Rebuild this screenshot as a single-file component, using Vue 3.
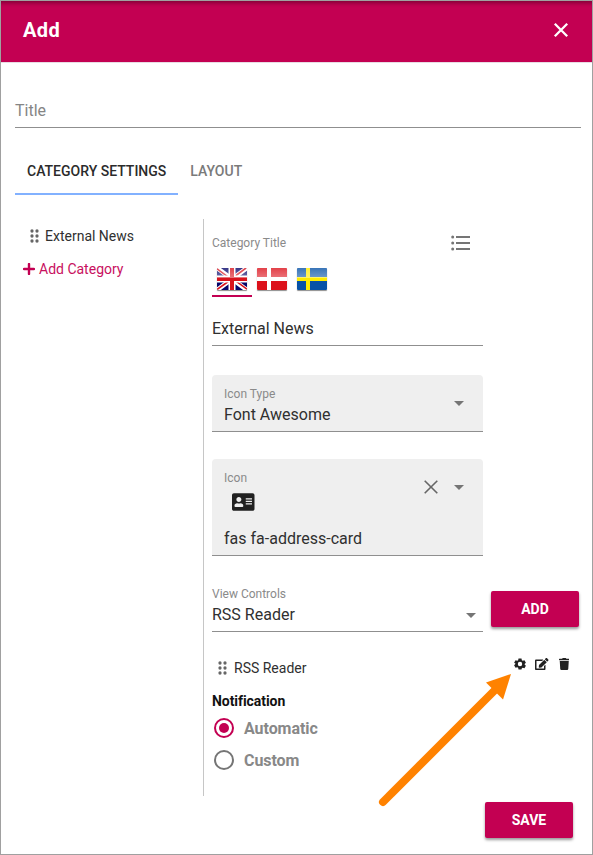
<script setup>
import { ref } from 'vue'

const tabs = ['Category Settings', 'Layout']
const activeTab = ref(0)
const notification = ref('Automatic')
const options = ['Automatic', 'Custom']
const dots = [[2, 2], [7, 2], [2, 7], [7, 7], [2, 12], [7, 12]]
</script>

<template>
  <div class="dialog">
    <header class="header">
      <h1>Add</h1>
      <svg class="close" viewBox="0 0 16 16"><path d="M1.8 1.8L14.2 14.2M14.2 1.8L1.8 14.2" /></svg>
    </header>

    <div class="title-field">Title</div>

    <nav class="tabs">
      <button
        v-for="(tab, i) in tabs"
        :key="tab"
        :class="['tab', { active: activeTab === i }]"
        @click="activeTab = i"
      >{{ tab }}</button>
    </nav>

    <main class="content">
      <aside class="sidebar">
        <div class="category">
          <svg class="grip" viewBox="0 0 9 14"><circle v-for="(d, i) in dots" :key="i" :cx="d[0]" :cy="d[1]" r="1.65" /></svg>
          <span>External News</span>
        </div>
        <div class="add-category">
          <svg class="plus" viewBox="0 0 12 12"><path d="M6 1V11M1 6H11" /></svg>
          <span>Add Category</span>
        </div>
      </aside>

      <section class="panel">
        <div class="column">
          <div class="label-row">
            <span class="label">Category Title</span>
            <svg class="list" viewBox="0 0 19 16">
              <circle cx="1.7" cy="2" r="1.5" /><circle cx="1.7" cy="8" r="1.5" /><circle cx="1.7" cy="14" r="1.5" />
              <path d="M5 1H19V3H5zM5 7H19V9H5zM5 13H19V15H5z" />
            </svg>
          </div>

          <div class="flags">
            <span class="flag active">
              <svg viewBox="0 0 30 22">
                <defs>
                  <linearGradient id="gloss" x1="0" y1="0" x2="0" y2="1">
                    <stop offset="0" stop-color="#fff" stop-opacity=".2" />
                    <stop offset="1" stop-color="#fff" stop-opacity=".42" />
                  </linearGradient>
                </defs>
                <path fill="#06066b" d="M0 0H30V22H0z" />
                <path stroke="#fff" stroke-width="4.6" d="M0 0L30 22M30 0L0 22" />
                <path stroke="#d8131d" stroke-width="1.6" d="M0 .8L12 9.6M18 12.4L30 21.2M29 0L17 9M12 13L0 21.5" />
                <path stroke="#fff" stroke-width="7" d="M15 0V22M0 11H30" />
                <path stroke="#d8131d" stroke-width="4" d="M15 0V22M0 11H30" />
                <path fill="url(#gloss)" d="M0 0H30V10H0z" />
              </svg>
            </span>
            <span class="flag">
              <svg viewBox="0 0 30 22">
                <path fill="#dc111b" d="M0 0H30V22H0z" />
                <path stroke="#fff" stroke-width="4" d="M12 0V22M0 11H30" />
                <path fill="url(#gloss)" d="M0 0H30V10H0z" />
              </svg>
            </span>
            <span class="flag">
              <svg viewBox="0 0 30 22">
                <path fill="#0752a6" d="M0 0H30V22H0z" />
                <path stroke="#ffec00" stroke-width="4" d="M11 0V22M0 11H30" />
                <path fill="url(#gloss)" d="M0 0H30V10H0z" />
              </svg>
            </span>
          </div>

          <div class="text-field">External News</div>

          <div class="select filled type">
            <div class="select-text">
              <span class="label">Icon Type</span>
              <span class="value">Font Awesome</span>
            </div>
            <i class="caret"></i>
          </div>

          <div class="select filled icon-select">
            <div class="select-text">
              <span class="label">Icon</span>
              <svg class="card" viewBox="0 0 576 512"><path d="M528 32H48C21.5 32 0 53.5 0 80v352c0 26.5 21.5 48 48 48h480c26.5 0 48-21.5 48-48V80c0-26.5-21.5-48-48-48zm-352 96c35.3 0 64 28.7 64 64s-28.7 64-64 64-64-28.7-64-64 28.7-64 64-64zm112 236.8c0 10.6-10 19.2-22.4 19.2H86.4C74 384 64 375.4 64 364.8v-19.2c0-31.8 30.1-57.6 67.2-57.6h5c12.3 5.1 25.7 8 39.8 8s27.6-2.9 39.8-8h5c37.1 0 67.2 25.8 67.2 57.6v19.2zM512 312c0 4.4-3.6 8-8 8H360c-4.4 0-8-3.6-8-8v-16c0-4.4 3.6-8 8-8h144c4.4 0 8 3.6 8 8v16zm0-64c0 4.4-3.6 8-8 8H360c-4.4 0-8-3.6-8-8v-16c0-4.4 3.6-8 8-8h144c4.4 0 8 3.6 8 8v16zm0-64c0 4.4-3.6 8-8 8H360c-4.4 0-8-3.6-8-8v-16c0-4.4 3.6-8 8-8h144c4.4 0 8 3.6 8 8v16z" /></svg>
              <span class="value">fas fa-address-card</span>
            </div>
            <svg class="clear" viewBox="0 0 14 14"><path d="M.7 .7L13.3 13.3M13.3 .7L.7 13.3" /></svg>
            <i class="caret"></i>
          </div>
        </div>

        <div class="controls-row">
          <div class="select view-controls">
            <div class="select-text">
              <span class="label">View Controls</span>
              <span class="value">RSS Reader</span>
            </div>
            <i class="caret"></i>
          </div>
          <button class="btn">Add</button>
        </div>

        <div class="item-row">
          <svg class="grip" viewBox="0 0 9 14"><circle v-for="(d, i) in dots" :key="i" :cx="d[0]" :cy="d[1]" r="1.65" /></svg>
          <span class="item-name">RSS Reader</span>
          <div class="actions">
            <svg class="gear" viewBox="0 0 24 24"><path fill-rule="evenodd" d="M9 1h6l.7 3.5 1.8 1 3.4-1.1 2.9 5-2.6 2.4v1.4l2.6 2.4-2.9 5-3.4-1.1-1.8 1L15 23H9l-.7-3.5-1.8-1-3.4 1.1-2.9-5 2.6-2.4v-1.4L.2 9.4l2.9-5 3.4 1.1 1.8-1zM12 7.6a4.4 4.4 0 1 0 0 8.8 4.4 4.4 0 0 0 0-8.8z" /></svg>
            <svg class="edit" viewBox="0 0 576 512"><path d="M402.6 83.2l90.2 90.2c3.8 3.8 3.8 10 0 13.8L274.4 405.6l-92.8 10.3c-12.4 1.4-22.9-9.1-21.5-21.5l10.3-92.8L388.8 83.2c3.8-3.8 10-3.8 13.8 0zm162-22.9l-48.8-48.8c-15.2-15.2-39.9-15.2-55.2 0l-35.4 35.4c-3.8 3.8-3.8 10 0 13.8l90.2 90.2c3.8 3.8 10 3.8 13.8 0l35.4-35.4c15.2-15.3 15.2-40 0-55.2zM384 346.2V448H64V128h229.8c3.2 0 6.2-1.3 8.5-3.5l40-40c7.6-7.6 2.2-20.5-8.5-20.5H48C21.5 64 0 85.5 0 112v352c0 26.5 21.5 48 48 48h352c26.5 0 48-21.5 48-48V306.2c0-10.7-12.9-16-20.5-8.5l-40 40c-2.2 2.3-3.5 5.3-3.5 8.5z" /></svg>
            <svg class="trash" viewBox="0 0 448 512"><path d="M432 32H312l-9.4-18.7A24 24 0 0 0 281.1 0H166.8a23.7 23.7 0 0 0-21.4 13.3L136 32H16A16 16 0 0 0 0 48v32a16 16 0 0 0 16 16h416a16 16 0 0 0 16-16V48a16 16 0 0 0-16-16zM53.2 467a48 48 0 0 0 47.9 45h245.8a48 48 0 0 0 47.9-45L416 128H32z" /></svg>
          </div>
        </div>

        <h2>Notification</h2>
        <label
          v-for="o in options"
          :key="o"
          :class="['radio', { checked: notification === o }]"
          @click="notification = o"
        ><i></i><span>{{ o }}</span></label>
      </section>
    </main>

    <footer class="footer"><button class="btn">Save</button></footer>

    <svg class="arrow" viewBox="0 0 136 136">
      <path stroke="#ff8200" stroke-width="8" stroke-linecap="round" d="M5 130L118 17" />
      <path fill="#ff8200" d="M133 2L108 10.5L125 27.5z" />
    </svg>
  </div>
</template>

<style>
body { margin: 0; background: #fff; }
</style>

<style scoped>
* { box-sizing: border-box; }
.dialog {
  position: relative;
  width: 593px;
  height: 855px;
  border: 1px solid #a0a0a0;
  background: #fff;
  font-family: Roboto, sans-serif;
  color: #303030;
  overflow: hidden;
}
svg { display: block; flex: none; fill: none; }
.header {
  display: flex;
  justify-content: space-between;
  align-items: center;
  height: 62px;
  padding: 0 23px 3px 22px;
  background: #c30052;
  background-clip: padding-box;
  border-bottom: 1px solid #e8dce3;
  box-shadow: inset 0 5px 4px -3px rgba(0, 0, 0, .35);
  color: #fff;
}
h1 { margin: 0; font-size: 20px; line-height: 24px; font-weight: 700; letter-spacing: .4px; }
.close { width: 16px; height: 16px; stroke: #fff; stroke-width: 2.3; }
.title-field {
  height: 36px;
  margin: 29px 11px 0 14px;
  border-bottom: 1px solid #8f8f8f;
  font-size: 16px;
  line-height: 38px;
  color: #858585;
}
.tabs { display: flex; height: 47px; margin: 20px 0 0 14px; }
.tab {
  height: 47px;
  padding: 0 12px;
  border: 0;
  border-bottom: 2px solid transparent;
  background: none;
  font: 500 14px/20px Roboto, sans-serif;
  text-transform: uppercase;
  color: #7a7a7a;
}
.tab.active { color: #2b2b2b; border-bottom-color: #82b1ff; }
.content { display: flex; margin-top: 24px; height: 577px; }
.sidebar { width: 202px; font-size: 14px; line-height: 20px; padding-top: 7px; }
.category { display: flex; align-items: center; gap: 6px; padding-left: 29px; }
.grip { width: 9px; height: 14px; fill: #666; }
.add-category { display: flex; align-items: center; gap: 4px; margin-top: 13px; padding-left: 22px; color: #c8105e; }
.plus { width: 12px; height: 12px; stroke: #c30052; stroke-width: 2.4; stroke-linecap: round; }
.panel { flex: 1; border-left: 1px solid #c6c6c6; padding-left: 8px; }
.column { width: 271px; }
.label { font-size: 12px; line-height: 16px; color: #8a8a8a; }
.label-row { display: flex; justify-content: space-between; align-items: center; height: 16px; margin-top: 16px; padding-right: 13px; }
.list { width: 19px; height: 16px; fill: #757575; }
.flags { display: flex; margin-top: 11px; }
.flag { width: 40px; height: 35px; padding: 6px 5px 0; }
.flag.active { border-bottom: 2px solid #c30052; }
.flag svg { width: 30px; height: 22px; border-radius: 1px; box-shadow: 0 1px 1px rgba(0, 0, 0, .45); }
.text-field { height: 34px; margin-top: 15px; border-bottom: 1px solid #8f8f8f; font-size: 16px; line-height: 33px; padding-bottom: 1px; }
.select { display: flex; border-bottom: 1px solid #8f8f8f; }
.select-text { flex: 1; display: flex; flex-direction: column; }
.value { margin-top: 1px; font-size: 16px; line-height: 24px; }
.filled { padding: 11px 19px 0 12px; background: #efefef; border-radius: 4px 4px 0 0; }
.caret { width: 0; height: 0; border: 5px solid transparent; border-top-color: #757575; border-bottom: 0; }
.type { height: 57px; margin-top: 29px; }
.filled .caret { margin-top: 15px; }
.icon-select { height: 97px; margin-top: 27px; }
.card { width: 22.5px; height: 20px; margin: 6px 0 14px 8px; fill: #212121; }
.clear { width: 14px; height: 14px; margin: 10px 16px 0 0; stroke: #666; stroke-width: 1.6; }
.controls-row { display: flex; gap: 8px; margin-top: 30px; align-items: flex-start; }
.view-controls { width: 271px; height: 46px; padding-right: 7px; }
.view-controls .caret { margin-top: 27px; }
.btn {
  width: 88px;
  height: 36px;
  padding: 0;
  border: 0;
  border-radius: 2px;
  background: #c30052;
  box-shadow: 0 2px 3px rgba(0, 0, 0, .4);
  color: #fff;
  font: 700 14px/20px Roboto, sans-serif;
  text-transform: uppercase;
}
.controls-row .btn { margin-top: 5px; }
.item-row { display: flex; align-items: center; height: 20px; margin-top: 26px; padding-left: 6px; font-size: 14px; }
.item-name { margin-left: 7px; }
.actions { display: flex; align-items: center; margin: -9px 23px 0 auto; }
.actions svg { fill: #212121; }
.gear { width: 12px; height: 12px; margin-right: 9px; }
.edit { width: 13.5px; height: 12px; margin-right: 10px; }
.trash { width: 10.5px; height: 12px; }
h2 { margin: 13px 0 1px; font-size: 14px; line-height: 20px; font-weight: 700; letter-spacing: -.06px; color: #111; }
.radio { display: flex; align-items: center; height: 32px; padding-left: 2px; gap: 10px; font-size: 16px; font-weight: 700; letter-spacing: -.06px; color: #888; }
.radio i { width: 20px; height: 20px; border: 2px solid #757575; border-radius: 50%; padding: 3px; }
.radio.checked i { border-color: #c30052; background: #c30052 content-box; }
.footer { display: flex; justify-content: flex-end; padding: 6px 19px 0 0; }
.arrow { position: absolute; left: 377px; top: 671px; width: 136px; height: 136px; }
</style>
